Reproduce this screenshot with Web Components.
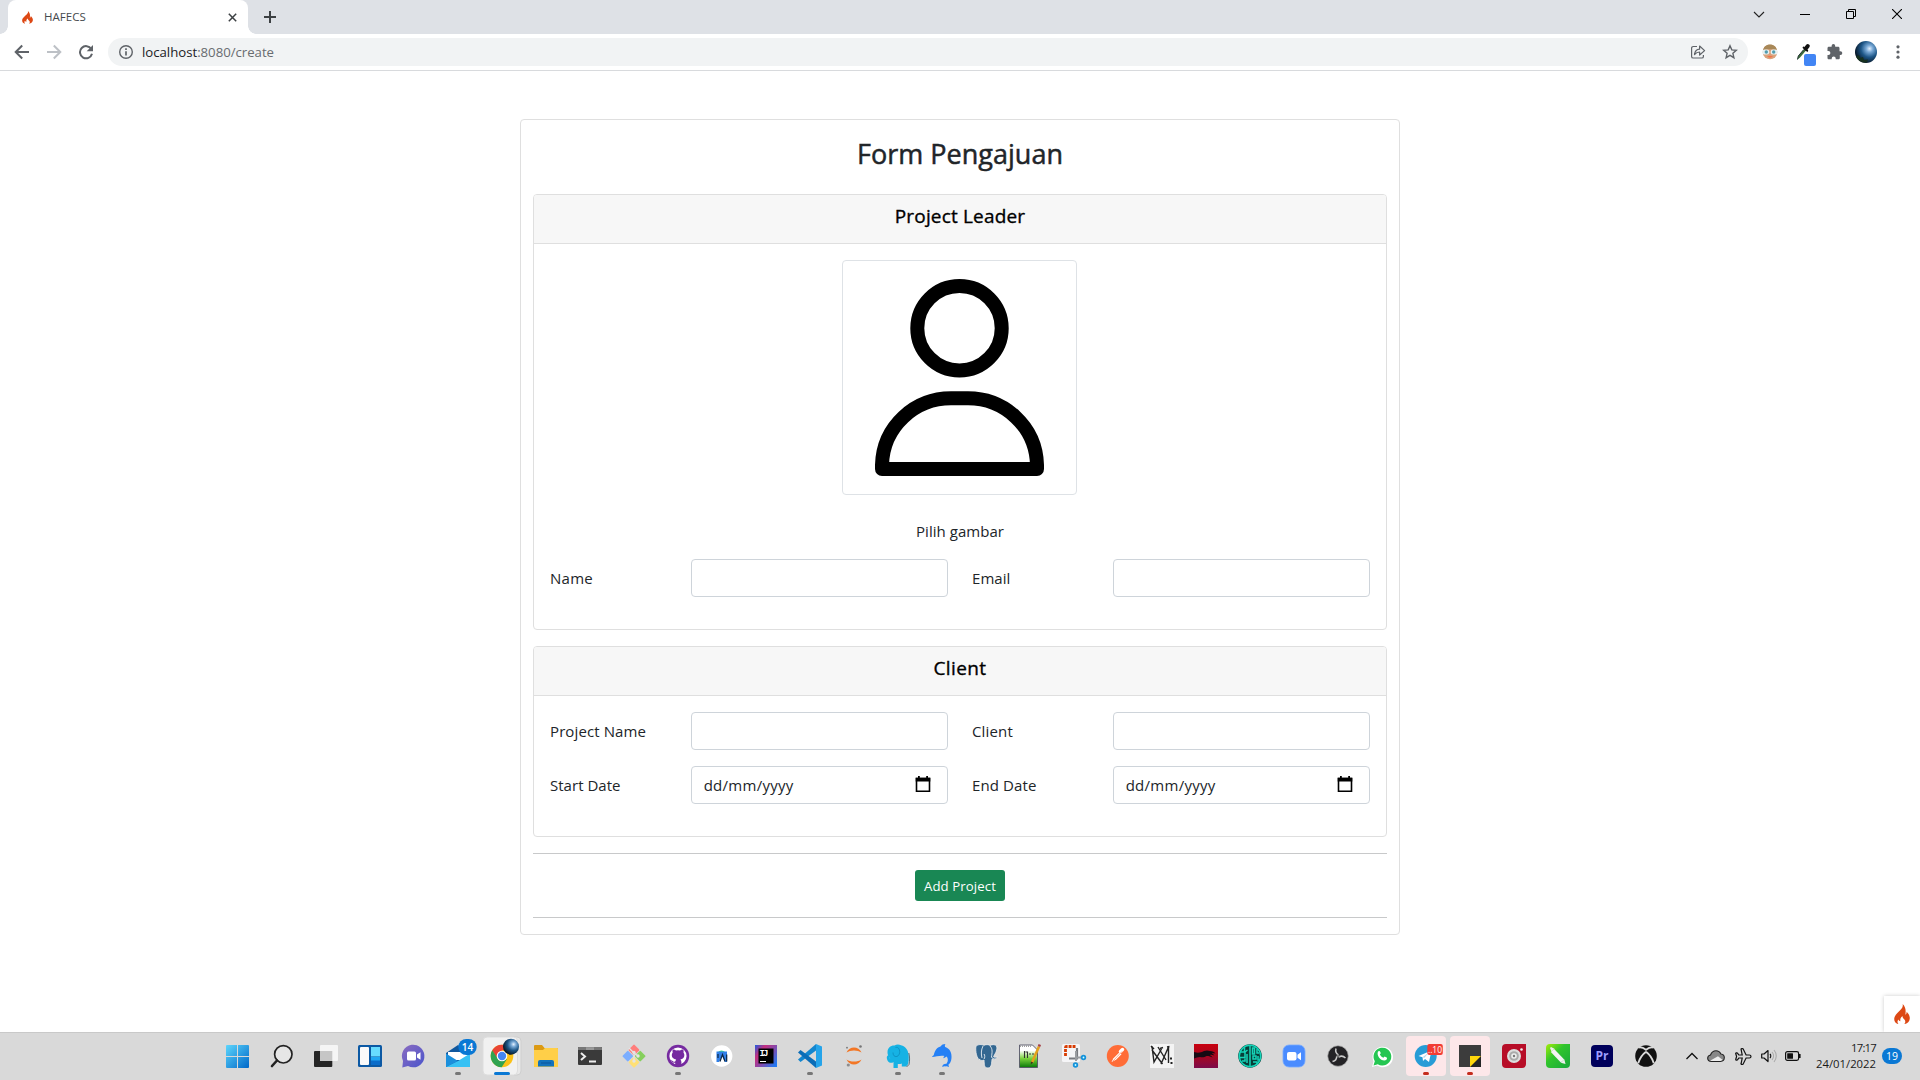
<!DOCTYPE html>
<html lang="id">
<head>
<meta charset="utf-8">
<title>HAFECS</title>
<style>
html,body{margin:0;height:100%;overflow:hidden;background:#fff}
body{font-family:"Open Sans","Noto Sans",sans-serif;color:#212529}
</style>
</head>
<body>
<desktop-screen></desktop-screen>
<script>
const FLAME='<path fill="#dd4814" d="M8.6 0C9.6 3.3 7 5.200 4.600 7.700 2.300 10.200.2 12.200.2 15c0 2.700 1.800 4.700 4.400 5.200C3.300 19 3.100 17.200 4.300 15.500c.6 1.200 1.200 1.600 2.100 1.700C5.800 14.600 7 13.200 8.500 12c0 1.800.8 2.500 1.900 3.600 1.300 1.400 1.200 3.400-.3 4.600 3.300-.6 5.700-2.900 5.700-6 0-3-1.700-4.900-3.200-6.400.1 1.500-.3 2.400-1.300 2.900C12.100 6.500 11.600 2.800 8.600 0Z"/>';
const ORB='<defs><radialGradient id="o" cx=".66" cy=".35" r=".7"><stop offset="0" stop-color="#e4f1ff"/><stop offset=".22" stop-color="#79a9d6"/><stop offset=".55" stop-color="#1d5687"/><stop offset="1" stop-color="#06121f"/></radialGradient></defs>';
const ICONS={
favicon:[11,13,'<g transform="scale(.69 .63)">'+FLAME+'</g>'],
flame:[16,20.5,FLAME],
tabclose:[9,9,'<path d="M.8.8 8.200 8.200M8.200.8.8 8.200" stroke="#3c4043" stroke-width="1.500"/>'],
plus:[12,12,'<path d="M6 0v12M0 6h12" stroke="#3c4043" stroke-width="2"/>'],
back:[16,16,'<path d="M15 8H2.200M8.200 1.500 1.700 8l6.500 6.500" fill="none" stroke="#5f6368" stroke-width="2"/>'],
fwd:[16,16,'<path d="M1 8h12.800M7.800 1.500 14.300 8l-6.500 6.500" fill="none" stroke="#bdc1c6" stroke-width="2"/>'],
reload:[16,16,'<path d="M13.300 5A6.100 6.100 0 1 0 14 9.800" fill="none" stroke="#5f6368" stroke-width="2"/><path d="M15 1v6.300H8.700z" fill="#5f6368"/>'],
info:[16,16,'<circle cx="8" cy="8" r="6.300" fill="none" stroke="#5f6368" stroke-width="1.400"/><path d="M8 7.200v4.300M8 4.300v1.600" stroke="#5f6368" stroke-width="1.700"/>'],
share:[16,16,'<path d="M7 2.500H3.200A1.600 1.600 0 0 0 1.600 4.100v8.300A1.600 1.600 0 0 0 3.200 14h8.600a1.600 1.600 0 0 0 1.600-1.600V11M4.500 10.500C5 7.200 7 5.300 9.600 5.200V2l5 4.600-5 4.400V8C7.500 8 6 8.800 4.500 10.500Z" fill="none" stroke="#5f6368" stroke-width="1.200" stroke-linejoin="round"/>'],
star:[16,16,'<path d="m8 1.800 1.800 4.100 4.500.4-3.400 3 1 4.400L8 11.400l-3.900 2.300 1-4.400-3.400-3 4.500-.4Z" fill="none" stroke="#5f6368" stroke-width="1.400"/>'],
face:[16,16,'<circle cx="8" cy="8" r="7.300" fill="#d9a37c"/><path d="M1 7C1.500 3 4 .6 8 .6S14.500 3 15 7C12 4.500 4 4.500 1 7Z" fill="#a88858"/><path d="M5 12.500c2-1 4-1 6 0-1.500 1.500-4.500 1.500-6 0Z" fill="#f4734a"/><rect x=".3" y="5.500" width="7" height="5" rx="2.300" fill="#e9f1f3"/><rect x="8.700" y="5.500" width="7" height="5" rx="2.300" fill="#e9f1f3"/><circle cx="4.300" cy="8" r="1.700" fill="#529daf"/><circle cx="11.700" cy="8" r="1.700" fill="#529daf"/>'],
dropper:[24,30,'<g transform="translate(1 1)"><path d="m4.500 21.500.8-3.500 6-7 1.700 1.500-6 7Z" fill="#3b6b3c"/><path d="m4.500 21.500.8-3.500 5.500-6.500" stroke="#233" fill="none"/><path d="m10.500 9.500 3.800 3.300" stroke="#111" stroke-width="1.800" stroke-linecap="round"/><path d="m12.800 10.500 2-2.500" stroke="#111" stroke-width="4" stroke-linecap="round"/></g><rect x="12" y="17" width="12" height="12" rx="2" fill="#4285f4"/>'],
puzzle:[16,16,'<path fill="#5f6368" d="M13.400 7.300h-.9V4.200c0-.8-.6-1.400-1.400-1.400H8.200v-.9a1.800 1.800 0 0 0-3.600 0v.9H1.900C1.100 2.800.5 3.400.5 4.200v2.900h.9a2 2 0 0 1 0 4H.5v2.800c0 .8.6 1.400 1.400 1.400h2.800v-.9a2 2 0 0 1 4 0v.9h2.700c.8 0 1.400-.6 1.400-1.400V11h.7a1.850 1.850 0 0 0-.1-3.700Z"/>'],
orb:[22,22,ORB+'<circle cx="11" cy="11" r="11" fill="url(#o)"/><path d="M1 15.500 4 14l1 3 3-1 1 3 4-.5-1 3C7 22 2.500 19.500 1 15.500Z" fill="#16301f"/>'],
dots:[4,16,'<g fill="#5f6368"><circle cx="2" cy="2.800" r="1.600"/><circle cx="2" cy="8" r="1.600"/><circle cx="2" cy="13.200" r="1.600"/></g>'],
wchev:[12,12,'<path d="m1 4 5 5 5-5" fill="none" stroke="#222" stroke-width="1.100"/>'],
wmin:[10,10,'<path d="M0 5.500h10" stroke="#000"/>'],
wmax:[10,10,'<path d="M.5 2.500h7v7h-7zM2.500 2.500v-2h7v7h-2" fill="none" stroke="#000"/>'],
wclose:[10,10,'<path d="m0 0 10 10M10 0 0 10" stroke="#000" stroke-width="1.100"/>'],
person:[233,233,'<g fill="none" stroke="#000" stroke-width="14"><circle cx="116.500" cy="67.200" r="42.200"/><path stroke-linejoin="round" d="M39 208v-4C40 165 72 137.300 108 137.300h17c36 0 68 27.700 69 66.700v4Z"/></g>'],
cal:[16,17,'<path d="M1.500 2.500h13v12.800h-13z" fill="none" stroke="#000" stroke-width="1.600"/><path d="M.7 1.700h14.600V5.500H.7zM3 0h1.800v2H3zM11.200 0H13v2h-1.800z"/>'],
up:[14,14,'<path d="m1.500 10 5.500-5.500L12.500 10" fill="none" stroke="#111" stroke-width="1.300"/>'],
cloud:[18,14,'<path d="M4.500 12.500C1.800 12.300.6 10.800.7 9c.1-1.700 1.300-2.700 2.800-3C4.500 3.300 6.500 1.700 9 1.700c2.300 0 4 1.200 4.900 3.300 2.100.2 3.400 1.500 3.400 3.600 0 2.300-1.500 3.800-3.800 3.900Z" fill="#888"/><path d="m3 11.800 8-4.600 5 4c-.7.800-1.500 1.200-2.500 1.300h-9Z" fill="#eee"/><path d="M4.500 12.500C1.800 12.300.6 10.800.7 9c.1-1.700 1.300-2.700 2.800-3C4.500 3.300 6.500 1.700 9 1.700c2.300 0 4 1.200 4.900 3.300 2.100.2 3.400 1.500 3.400 3.600 0 2.300-1.500 3.800-3.800 3.900Z" fill="none" stroke="#222" stroke-width="1.100"/>'],
plane:[17,17,'<path d="M16 8.500c0-.9-.8-1.500-1.700-1.500h-3.200L8.300 1.200c-.2-.3-.4-.5-.8-.5h-.8c-.5 0-.7.400-.6.8L7.200 7H3.800L2.500 5.200c-.1-.2-.3-.3-.6-.3h-.7c-.4 0-.6.3-.5.600l.9 3-.9 3c-.1.300.1.600.5.600h.7c.3 0 .5-.1.600-.3L3.800 10h3.400l-1.100 5.500c-.1.400.1.800.6.8h.8c.4 0 .6-.2.800-.5L11.100 10h3.200c.9 0 1.700-.6 1.700-1.500Z" fill="none" stroke="#111" stroke-width="1.200"/>'],
vol:[16,14,'<path d="M.7 5v4H3l4 3.500v-11L3 5Z" fill="none" stroke="#111" stroke-width="1.200" stroke-linejoin="round"/><path d="M9 5c1 1 1 3 0 4" fill="none" stroke="#111" stroke-width="1.200"/><path d="M11 3c2 2.300 2 5.700 0 8M13 1c3 3.500 3 8.500 0 12" fill="none" stroke="#aaa" stroke-width="1.100"/>'],
batt:[16,10,'<rect x=".6" y=".6" width="13" height="8.800" rx="1.800" fill="none" stroke="#111" stroke-width="1.200"/><path d="M14.800 3v4" stroke="#111" stroke-width="1.600"/><rect x="2.200" y="2.200" width="5.800" height="5.600" rx=".5" fill="#111"/>']
};
/* Task bar glyphs share one 44x48 cell. */
const ind='<rect x="19" y="40" width="6" height="3" rx="1.500" fill="#777"/>';
const ired='<rect x="19" y="40" width="6" height="3" rx="1.500" fill="#c42b1c"/>';
const pink='<rect x="2" y="4" width="40" height="40" rx="4" fill="#fde7e9"/>';
const APPS=[
'<defs><linearGradient id="g" x2="1" y2="1"><stop offset="0" stop-color="#5dd6fc"/><stop offset="1" stop-color="#0067c8"/></linearGradient></defs><path fill="url(#g)" d="M10 14q0-1 1-1h10v11H10zM22 13h10q1 0 1 1v10H22zM10 25h11v11H11q-1 0-1-1zM22 25h11v10q0 1-1 1H22z"/>',
'<circle cx="23.300" cy="22.300" r="8.700" fill="#e6e6e6" stroke="#222" stroke-width="1.700"/><path d="m17 28.500-5 5.500" stroke="#222" stroke-width="2.600" stroke-linecap="round"/>',
'<rect x="10" y="19" width="18.300" height="16" rx="1" fill="#252525"/><rect x="16" y="13" width="18" height="16" rx="1" fill="#f5f5f5"/><path d="M16 19h12.300v10H16z" fill="#c6c6c6"/>',
'<rect x="10" y="13" width="24" height="22" rx="1.500" fill="#0c59a4"/><rect x="12" y="15" width="9" height="18" rx="1" fill="#fafafa"/><path fill="#68dcff" d="M23 15h9v9.500h-9z"/><path fill="#0a6cc9" d="M23 25h9v8h-9z"/><path fill="#20a6f2" d="M23 25h9v3.500h-9z"/>',
'<defs><linearGradient id="g" x2="1" y2="1"><stop offset="0" stop-color="#8b6cc0"/><stop offset="1" stop-color="#4a55cc"/></linearGradient></defs><path d="M10.300 35.500 11 29a11.300 11.300 0 1 1 5 5.100Z" fill="url(#g)"/><rect x="15" y="19.500" width="9" height="9" rx="1.500" fill="#fff"/><path d="m25 22.500 3.500-2.300v7.600L25 25.500z" fill="#fff"/>',
'<path d="M10 21 22 13l12 8v14H10z" fill="#11589e"/><path d="M12 20h20v8H12z" fill="#fff"/><path d="M10 21.500 22 29l-12 6z" fill="#1b8fdc"/><path d="M34 21.500V35H10l12-6Z" fill="#37c1f4"/><rect x="22.300" y="7" width="18.400" height="16" rx="8" fill="#0a78d4"/><text x="31.500" y="18.800" font-size="10" text-anchor="middle" fill="#fff" font-weight="600">14</text>'+ind,
ORB+'<rect x="7" y="5" width="34" height="38" rx="4" fill="#e8e8e8" stroke="#cfcfcf"/><rect x="3" y="5" width="34.500" height="38" rx="4" fill="#f1f1f1" stroke="#ddd"/><circle cx="22" cy="24" r="11.300" fill="#fbc116"/><path d="M12.200 18.300A11.300 11.300 0 0 1 31.800 18.300H22l-5 8.500Z" fill="#e94435"/><path d="M12.200 18.300A11.300 11.300 0 0 0 21.700 35.300L27 27l-8 1.500Z" fill="#31a350"/><circle cx="22" cy="24" r="5.300" fill="#fff"/><circle cx="22" cy="24" r="4.200" fill="#4486f4"/><circle cx="31" cy="14.700" r="8" fill="url(#o)"/><rect x="14" y="40" width="16" height="3" rx="1.500" fill="#0a78d4"/>',
'<path d="M10 14q0-1 1-1h7l2.500 3H33q1 0 1 1v17H10z" fill="#dc9a14"/><path d="M10 18h9l2-2h12q1 0 1 1v18H10z" fill="#ffcf48"/><path d="M14 34.500V30q0-2 2-2h12q2 0 2 2v4.500z" fill="#1273bd"/><path d="M17 31h10" stroke="#0b559b"/>',
'<rect x="10" y="15" width="24" height="18" rx="1" fill="#3a3a3a"/><path d="M10 18v-2q0-1 1-1h22q1 0 1 1v2z" fill="#777"/><path d="M18 15.200h8V18h-8z" fill="#999"/><path d="m13 21 4 3.500-4 3.500M21 29.500h7" fill="none" stroke="#eee" stroke-width="2"/>',
'<g transform="rotate(45 22 24)"><rect x="13.700" y="15.700" width="8" height="8" rx="1" fill="#ff7d7b"/><rect x="22.500" y="15.700" width="8" height="8" rx="1" fill="#86cf5d"/><rect x="13.700" y="24.500" width="8" height="8" rx="1" fill="#7caeff"/><rect x="22.500" y="24.500" width="8" height="8" rx="1" fill="#ffe076"/></g><path d="m17 16 5 5v8M22 21l4 3" stroke="#e4e4e4" stroke-width="1.300" fill="none"/><g fill="#e4e4e4"><circle cx="22" cy="20.500" r="1.700"/><circle cx="26" cy="24" r="1.700"/><circle cx="22" cy="29" r="1.700"/></g>',
'<circle cx="22" cy="24" r="11.200" fill="#762aa0"/><circle cx="22" cy="24" r="8.600" fill="#fff"/><path fill="#762aa0" d="M16.700 17.500q2-.2 3.300 1 2-.4 4 0 1.300-1.200 3.300-1 .6 1.600.2 3 1.200 1.500.8 3.500-.5 3-3.900 3.400 1 1 1 2.600V33h-6.200v-2.300c-3 .6-3.300-1.700-4.500-2.300 1.800-.3 2 1.500 3.300 1.400 1 0 1.400-.2 1.500-.8.1-.8.4-1.200.7-1.600-3.400-.4-4.400-2.400-4.400-4.400q0-1.500.9-2.500-.5-1.300 0-3Z"/>'+ind,
'<circle cx="21.700" cy="24" r="10.700" fill="#fff"/><path d="M18 20a4.300 3.600 0 0 1 7 0z" fill="#3ddc84"/><path d="M16.500 19.500h10.500V30H25l-3-6-3 6h-2.500z" fill="#3180e8"/><path d="m20 29.500 2.500-7 2.500 7M26.700 22.500v7M18 22v4" stroke="#0d2742" stroke-width="1.200" fill="none"/>',
'<defs><linearGradient id="g" x2="1" y2=".8"><stop offset="0" stop-color="#1d5de0"/><stop offset=".3" stop-color="#c52e7e"/><stop offset=".6" stop-color="#8648aa"/><stop offset="1" stop-color="#2378f2"/></linearGradient></defs><rect x="11" y="13" width="22" height="22" fill="url(#g)"/><path d="M14.500 16.500h15v15h-15z"/><text x="15.500" y="24" font-size="9" font-family="Liberation Mono" font-weight="700" fill="#fff" textLength="9">IJ</text><path d="M16 29.500h6" stroke="#fff"/>',
'<path d="m28 12 6 2.500v19L28 36z" fill="#25a4ea"/><path d="m28 12-18 15.500 2.500 2.500L28 18.500z" fill="#1386cf"/><path d="m28 36-18-15.500 2.500-2.500L28 29.500z" fill="#0b6db7"/>'+ind,
'<path d="M14.500 20.500c3-6.700 12-6.700 15 0-4-2.700-11-2.700-15 0ZM14.500 27.500c3 6.700 12 6.700 15 0-4 2.700-11 2.700-15 0Z" fill="#f37726"/><circle cx="28.500" cy="14.500" r="1.300" fill="#767677"/><circle cx="15" cy="15.700" r=".9" fill="#767677"/><circle cx="16.300" cy="33" r="1.600" fill="#8d8d8e"/>',
'<path d="M11.500 20c.2-4 3-6.600 7-6.400 1.800-1.300 4.500-1.300 6.500-.3 4.500 1 7.300 5 7.600 9.700.4 4 .1 7-1 10l-1.800 1.500h-4V31.500c-1.500.6-2.700.7-4 .4V36H17.500v-6c-2 1.500-4.800 1-6-1.500-.8-2-1-3.500-.2-4.500.8-.8 2-.3 2 .7 0 1 .3 1.500 1 1.800-1.800-1.800-3-4-2.800-6.500Z" fill="#16b2e4"/><path d="M19.500 15.500c4.500-1.500 6 7 1.500 9-3 .5-4-1.500-4-4" fill="none" stroke="#0c86b8" stroke-width=".7"/><path d="M32.800 21c1 4 1 8 .2 11.500l-2.500 2.500" fill="none" stroke="#355564" stroke-width=".8"/>'+ind,
'<path d="M12 25c.5-1 1-1.300 1.700-1.700C15 18 17 15.500 20.500 14.500c1-1.700 2.800-2.500 5-2.500-.8 1.200-.8 2-.3 3 4.800 1.500 6.800 6 6.300 11-.2 3.500-1.500 5.500-3.300 7 .8.600.8 1.300.6 2-1-.6-2-.8-3-.6-1.200-.4-2.300 0-3.600.5.200-2 2-3.300 4.300-3.100 2-2.800 1.600-5.500.2-7.300l-3 1.800c-.5-1 0-1.700.8-2.400-3.500-.7-8.500.4-12.500 1.100Z" fill="#2580f5"/>'+ind,
'<path d="M12 14c2.500-2 5.500-1.700 8-.7 2-1 4.500-.8 6 .1 2.500-1.200 5.500-1 6.500.6 1.300 3-1 7.500-3 10.500 1 1 2.500.7 4 .5-1 2-3.500 2.500-5.500 2.200-.5 3 0 8.800-4 8.800-4.300 0-3.500-4-4-8-1.500 1-3.500.5-4-.5-3 .5-5-8.500-4-13.500Z" fill="#336791" stroke="#eee" stroke-width=".8"/><path d="M19 14c-2 4-2 8-1 12M26 14c3 3 2 7 1.500 11 1 2 2 1.500 3 1M20 22c1 1 1 4 0 5" stroke="#fff" stroke-width=".8" fill="none"/>',
'<defs><linearGradient id="g" x2="0" y2="1"><stop offset=".25" stop-color="#fff"/><stop offset=".6" stop-color="#79d23b"/><stop offset="1" stop-color="#087808"/></linearGradient></defs><path d="M11.500 13h13l5 5v17.500h-18z" fill="url(#g)" stroke="#556" stroke-width=".9"/><path d="M12 14.200h12" stroke="#777" stroke-dasharray="1 1"/><path d="M16.500 19v7M17.500 20h2v6M21 22h2M24 22h2" stroke="#333" stroke-width="1.100" fill="none"/><path d="m24 30.500 7-16" stroke="#e3a11d" stroke-width="2.600"/><path d="m31 14.500.8-2" stroke="#a64047" stroke-width="2.600"/><path d="m22.800 32.500.2-3 2.200 1z" fill="#432"/>',
'<rect x="10" y="12" width="18" height="18" rx="1.500" fill="#f5f5f7"/><path d="M13.500 24v-8.500q0-1 1-1h9" fill="none" stroke="#d83b01" stroke-width="2.800" stroke-dasharray="3 1"/><path d="M25 16v10.500h-8" stroke="#787b80" stroke-width="2.200" fill="none"/><path d="M24 19v10M24 25.500h6" stroke="#9a9da1" stroke-width="2"/><g fill="#cff" stroke="#1592db" stroke-width="1.800"><circle cx="31.500" cy="25.500" r="1.800"/><circle cx="23.500" cy="33" r="1.800"/></g>',
'<circle cx="21.800" cy="24" r="11" fill="#ff6c37"/><path d="m15.500 30 2-3.800 6-6 2 2-5.500 5.500Z" fill="#fff"/><path d="m24.500 19.500 2-2" stroke="#fff" stroke-width="3.500" stroke-linecap="round"/><path d="m17 29 9-9.500" stroke="#ff6c37" stroke-width=".6"/>',
'<path fill="#f4f4f4" d="M10 12h24v24H10z"/><path d="M12 14.500 14 30l7.500-13M12 18l10.500 14M21 32l7.500-17v16M18 15l8 13" fill="none" stroke="#222" stroke-width="1.400"/><path d="m11 14 3 3M20 16.500l3-1M27 15l2.500-.5" stroke="#222" stroke-width="1.500"/><path d="M30 25.500h2v2h-2zM30.500 30h2v2h-2z" fill="#222"/>',
'<defs><linearGradient id="g" x2="0" y2="1"><stop offset="0" stop-color="#c8000f"/><stop offset=".5" stop-color="#a8061f"/><stop offset="1" stop-color="#7c0a4a"/></linearGradient></defs><path fill="url(#g)" d="M10 12h24v24H10z"/><path d="M10 20c4 1.200 7 .6 10-1 2-.7 4-.7 6 0 2.500 0 4.500 1 5.500 2.700-1.500-.4-2.500-.6-3.700-.3 1.700.5 2.200 1.100 2.500 2.200-1.700-.8-3-1-4.600-.7 1.300.8 2.500 1.600 3 2.700-2-1.200-4-1.700-6.200-1.600-1.500 1.200-4.500 1.500-6.500 1-2 .1-4 1-6 1.500Z" fill="#170a13"/>',
'<circle cx="22" cy="24" r="11.800" fill="#083d38"/><g fill="none" stroke="#16d5b9" stroke-width="1.500"><circle cx="22" cy="24" r="10.700"/><path d="M22 13v22M12 20h4.500v-4.500M12 25.500h5V20l2.500-2M14 29h3v-2.500M19 31v-9M24.500 16v6h2v-6zM29 17v4h2M25 24h3v3h-3zM30 24v4h2M25 30h4v3"/></g>',
'<rect x="11" y="13" width="22" height="22" rx="6" fill="#4a8cff" stroke="#76a9ff" stroke-width=".8"/><rect x="15" y="20" width="9.500" height="8.500" rx="2" fill="#fff"/><path d="m25.500 22.700 3.500-2.500v8l-3.500-2.400z" fill="#fff"/>',
'<circle cx="22" cy="24" r="10.300" fill="#242326" stroke="#aaa" stroke-width=".7"/><g fill="none" stroke="#c9c9c9" stroke-width="1.500"><path id="b" d="M20 16.500c-.8 3 0 5 2.500 6.300"/><use href="#b" transform="rotate(120 22 24)"/><use href="#b" transform="rotate(240 22 24)"/></g><circle cx="22" cy="24" r="1.500" fill="#777"/>',
'<path d="m12 35 1.500-5.500A10.300 10.300 0 1 1 17 33.500Z" fill="#fff"/><path d="m13.500 33.500 1.300-4.300a8.900 8.900 0 1 1 3 3Z" fill="#25c652"/><path d="M18 19.500c1-1 2-.5 2.300.5l.5 1.300-1 1.200q1.200 2.300 3.500 3.300l1.400-1.300 2.300 1.200c.3 1.500-1 2.800-2.700 2.800-4 0-8-5-6.300-9Z" fill="#fff"/>',
pink+'<circle cx="21.700" cy="24" r="11" fill="#289cd6"/><path d="m14.500 24 13-5.500-2.500 11.500-4-3-2 2-.5-3.700Z" fill="#fff"/><path d="m18.500 25.300 6-4.500-4 5" fill="#b9d9ea"/><rect x="23.300" y="12" width="15.500" height="11" rx="2" fill="#f23c34"/><text x="31" y="20.700" font-size="8.500" text-anchor="middle" fill="#fff">..10</text>'+ired,
pink+'<path d="M11 13h22v11l-11 11H11z" fill="#3c3c3c"/><path d="M33 24v11H22V24z" fill="#252525"/><path d="M22 24h11L22 35z" fill="#ffd60a"/>'+ired,
'<path d="M14 12h20v20q0 4-4 4H14q-4 0-4-4V16q0-4 4-4z" fill="#b70d27"/><circle cx="22" cy="24" r="7" fill="#ddd"/><circle cx="22" cy="24" r="4.800" fill="#aaa"/><circle cx="22" cy="24" r="2.800" fill="#eee"/><circle cx="22" cy="24" r="1.200" fill="#777"/><circle cx="29.500" cy="17.500" r="1.300" fill="#eee"/>',
'<defs><linearGradient id="g" x2="1" y2="1"><stop offset="0" stop-color="#a6ec08"/><stop offset=".4" stop-color="#30c52c"/><stop offset="1" stop-color="#18a83c"/></linearGradient></defs><path d="M14 12h20v20q0 4-4 4H14q-4 0-4-4V16q0-4 4-4z" fill="url(#g)"/><path d="m16.500 18.500 10 10.500" stroke="#f3f3f3" stroke-width="4.600"/><path d="m14 16 1-1 3.500 1.800-3 2.700zM29.500 32l-4.700-1.300 3.500-3.400z" fill="#eee"/>',
'<rect x="11" y="13" width="22" height="22" rx="4" fill="#00005b"/><text x="22" y="28.200" font-size="12" text-anchor="middle" font-weight="700" fill="#9c9cff">Pr</text>',
'<circle cx="22" cy="24" r="10.800" fill="#111"/><path d="M14.500 15.500c3-.8 5.500.7 7.500 2.300 2-1.600 4.500-3.100 7.500-2.300M22 19.800c-4 3-6.500 7-7.800 11.500M22 19.800c4 3 6.500 7 7.800 11.500" fill="none" stroke="#dadada" stroke-width="1.900"/>'
];
function define(name,html,after){
  const t=document.createElement('template');t.innerHTML=html;
  customElements.define(name,class extends HTMLElement{
    connectedCallback(){if(this.shadowRoot)return;const r=this.attachShadow({mode:'open'});r.append(t.content.cloneNode(true));after&&after(this,r)}
  });
}
define('ui-icon','<style>:host{display:flex;align-items:center;justify-content:center;flex:none}svg{display:block}</style>',(h,r)=>{
  const [w,ht,p]=ICONS[h.getAttribute('name')];
  r.innerHTML+=`<svg width="${w}" height="${ht}" viewBox="0 0 ${w} ${ht}">${p}</svg>`;
});
define('task-icon','<style>:host{display:block;width:44px;height:48px;flex:none}svg{display:block;font-family:"Open Sans",sans-serif}</style>',(h,r)=>{
  r.innerHTML+=`<svg width="44" height="48" viewBox="0 0 44 48">${APPS[+h.getAttribute('app')]}</svg>`;
});
/* Text run tracked to a given advance width. */
define('ui-text','<style>:host{display:inline-block;white-space:nowrap}</style><slot></slot>',(h)=>{
  const w=+h.getAttribute('fit');if(!w)return;
  const n=h.textContent.length, s=(w-h.getBoundingClientRect().width)/n;
  h.style.letterSpacing=s.toFixed(3)+'px';
});
define('tab-strip',`<style>
:host{display:flex;height:34px;background:#dee1e6;padding-left:8px}
.tab{position:relative;width:240px;box-sizing:border-box;background:#fff;border-radius:8px 8px 0 0;display:flex;align-items:center;padding:0 11.500px 0 14px;font-size:11.5px;color:#45494d}
.tab:before,.tab:after{content:"";position:absolute;bottom:0;width:8px;height:8px}
.tab:before{left:-8px;background:radial-gradient(circle at 0 0,#dee1e6 7.500px,#fff 8px)}
.tab:after{right:-8px;background:radial-gradient(circle at 100% 0,#dee1e6 7.500px,#fff 8px)}
.t{flex:1;margin-left:11px;margin-top:-1px}
.plus{margin-left:16px}.win{display:flex;margin-left:auto;height:28px}.win ui-icon{width:46px}
</style><div class="tab"><ui-icon name="favicon"></ui-icon><div class="t"><ui-text fit="42">HAFECS</ui-text></div><ui-icon name="tabclose"></ui-icon></div><ui-icon class="plus" name="plus"></ui-icon>
<div class="win"><ui-icon name="wchev"></ui-icon><ui-icon name="wmin"></ui-icon><ui-icon name="wmax"></ui-icon><ui-icon name="wclose"></ui-icon></div>`);
define('tool-bar',`<style>
:host{display:flex;align-items:center;height:36px;box-sizing:content-box;border-bottom:1px solid #d8dadd;padding:0 6px;background:#fff}
ui-icon{width:32px}.pill{flex:1;display:flex;align-items:center;height:28px;background:#f1f3f4;border-radius:14px;margin:0 6px;padding:0 2px}
.u{flex:1;font-size:13.200px;color:#686c70}b{font-weight:400;color:#202124}
.d{width:36px}.z{width:26px;margin-right:2px}
</style><ui-icon name="back"></ui-icon><ui-icon name="fwd"></ui-icon><ui-icon name="reload"></ui-icon>
<div class="pill"><ui-icon name="info"></ui-icon><div class="u"><ui-text fit="132"><b>localhost</b>:8080/create</ui-text></div><ui-icon name="share"></ui-icon><ui-icon name="star"></ui-icon></div>
<ui-icon name="face"></ui-icon><ui-icon class="d" name="dropper"></ui-icon><ui-icon class="z" name="puzzle"></ui-icon><ui-icon name="orb"></ui-icon><ui-icon name="dots"></ui-icon>`);
define('form-card',`<style>
:host{display:block;border:1px solid #dfdfdf;border-radius:4px;margin-bottom:16px}
header{box-sizing:border-box;padding-top:9px;line-height:24px;text-align:center;background:#f7f7f7;border-bottom:1px solid #dfdfdf;border-radius:3px 3px 0 0;font-size:19px;-webkit-text-stroke:.35px #000;color:#000;height:49px}
.b{padding:16px 16px 32px;display:flex;flex-direction:column;gap:16px}
</style><header><slot name="head"></slot></header><div class="b"><slot></slot></div>`);
define('form-row',`<style>:host{display:grid;grid-template-columns:116.670px 257.330px 116.670px 257.330px;column-gap:24px;height:38px;line-height:38px;font-size:15px}</style><slot></slot>`);
define('form-input',`<style>:host{display:flex;align-items:center;justify-content:space-between;box-sizing:border-box;border:1px solid #ced4da;border-radius:4px;padding:0 16px 0 12px;height:38px;line-height:36px}ui-icon{margin-top:-1px}</style><slot></slot>`,(h,r)=>{
  if(h.hasAttribute('date')){r.innerHTML+='<ui-text fit="90">dd/mm/yyyy</ui-text><ui-icon name="cal"></ui-icon>'}
});
define('project-form',`<style>
:host{display:block;box-sizing:border-box;width:880px;height:816px;margin:48px auto 0;border:1px solid #dfdfdf;border-radius:4px;padding:16px 12px 0}
h3{margin:0 0 22px;line-height:35px;padding-bottom:1px;text-align:center;font-size:27px;font-weight:400;-webkit-text-stroke:.5px #212529}
.pic{display:block;align-self:center;width:233px;height:233px;border:1px solid #dee2e6;border-radius:4px;margin-right:1px}
.p{text-align:center;font-size:15px;line-height:24px;margin-top:8px}
hr{margin:0;border:0;height:1px;background:#c8c9ca}
.btn{display:flex;justify-content:center;margin:16px 0}
button{width:90px;height:31px;border:0;padding:0;border-radius:3px;background:#198754;color:#fff;font:13.200px "Open Sans",sans-serif}
</style><h3><ui-text fit="206">Form Pengajuan</ui-text></h3>
<form-card><ui-text slot="head" fit="130.500">Project Leader</ui-text><ui-icon class="pic" name="person"></ui-icon><div class="p"><ui-text fit="88">Pilih gambar</ui-text></div>
<form-row><span><ui-text fit="43">Name</ui-text></span><form-input></form-input><span><ui-text fit="38.500">Email</ui-text></span><form-input></form-input></form-row></form-card>
<form-card><ui-text slot="head" fit="53">Client</ui-text>
<form-row><span><ui-text fit="96">Project Name</ui-text></span><form-input></form-input><span><ui-text fit="41">Client</ui-text></span><form-input></form-input></form-row>
<form-row><span><ui-text fit="70.500">Start Date</ui-text></span><form-input date></form-input><span><ui-text fit="64.500">End Date</ui-text></span><form-input date></form-input></form-row></form-card>
<hr><div class="btn"><button><ui-text fit="72">Add Project</ui-text></button></div><hr>`);
define('task-bar',`<style>
:host{display:flex;align-items:center;box-sizing:border-box;height:48px;background:#d9d9d9;box-shadow:inset 0 1px #c9c9c9;padding-left:216px}
.apps{display:flex}.tray{margin-left:auto;display:flex;align-items:center;padding-right:18px;color:#1a1a1a}
.tray ui-icon{width:25px}.clk{text-align:right;font-size:11.300px;line-height:16px;width:70px;margin-right:6px}
.n{width:20px;height:16px;border-radius:8px;background:#0a78d4;color:#fff;font-size:10.500px;line-height:16px;text-align:center}
</style><div class="apps"></div><div class="tray"><ui-icon name="up"></ui-icon><ui-icon name="cloud" style="width:24px"></ui-icon><ui-icon name="plane" style="width:31px"></ui-icon><ui-icon name="vol" style="width:20px"></ui-icon><ui-icon name="batt" style="width:28px"></ui-icon><div class="clk" style="width:69px"><ui-text fit="25">17:17</ui-text><br><ui-text fit="60">24/01/2022</ui-text></div><div class="n">19</div></div>`,(h,r)=>{
  r.querySelector('.apps').innerHTML=APPS.map((_,i)=>`<task-icon app="${i}"></task-icon>`).join('');
});
define('desktop-screen',`<style>
:host{display:flex;flex-direction:column;width:1920px;height:1080px}
main{flex:1;display:flow-root;position:relative;background:#fff;overflow:hidden}
.dbg{position:absolute;right:0;bottom:0;width:36px;height:36px;background:#fff;box-shadow:0 0 4px #ccc}
</style><tab-strip></tab-strip><tool-bar></tool-bar><main><project-form></project-form><ui-icon class="dbg" name="flame"></ui-icon></main><task-bar></task-bar>`);
</script>
</body>
</html>
